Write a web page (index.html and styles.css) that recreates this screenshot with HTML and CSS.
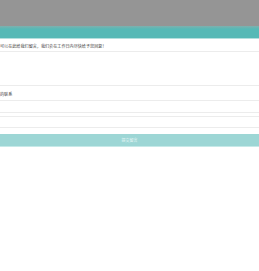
FILE: index.html
```html
<!DOCTYPE html>
<html lang="zh-CN">
<head>
    <meta charset="UTF-8">
    <meta name="viewport" content="width=device-width, initial-scale=1.0">
    <title>在线留言</title>
    <link rel="stylesheet" href="styles.css">
</head>
<body>
    <div class="page">
        <!-- 顶部 -->
        <div class="mask"></div>
        <div class="title-bar"></div>

        <!-- 留言表单 -->
        <form class="message-form">
            <div class="intro">可以在此给我们留言，我们会在工作日内尽快给予您回复！</div>
            <div class="message-box"></div>
            <div class="contact-label">的联系</div>
            <div class="field field-a"></div>
            <div class="field field-b"></div>
            <div class="field field-c"></div>
            <button type="button" class="submit-btn">提交留言</button>
        </form>
    </div>
</body>
</html>
```

FILE: styles.css
```css
:root {
    --primary-color: #56b9b6;
    --button-color: #9dd6d5;
    --line-color: #ececec;
    --text-color: #444444;
}

body {
    margin: 0;
    background: #ffffff;
    font-family: "Noto Sans CJK SC", "Noto Sans", sans-serif;
    color: var(--text-color);
}

.page {
    display: flex;
    flex-direction: column;
}

.mask {
    height: 26px;
    background: #959595;
}

.title-bar {
    height: 12px;
    background: linear-gradient(#7fb0ae, var(--primary-color) 25%);
    border-bottom: 1px solid #b3e0de;
}

.message-form {
    display: flex;
    flex-direction: column;
}

.intro {
    height: 10px;
    padding-top: 2px;
    font-size: 4.1px;
    line-height: 10px;
    border-bottom: 1px solid var(--line-color);
    white-space: nowrap;
}

.message-box {
    height: 33px;
    border-bottom: 1px solid var(--line-color);
}

.contact-label {
    height: 14px;
    font-size: 4.1px;
    line-height: 16px;
    border-bottom: 1px solid var(--line-color);
}

.field {
    border-bottom: 1px solid var(--line-color);
}

.field-a {
    height: 11px;
}

.field-b {
    height: 3px;
}

.field-c {
    height: 10px;
}

.submit-btn {
    margin-top: 6px;
    height: 12px;
    padding: 0;
    border: none;
    border-bottom: 1px solid #c6e9e8;
    box-sizing: content-box;
    background: var(--button-color);
    color: #e8f7f6;
    font-family: inherit;
    font-size: 4px;
    line-height: 12px;
    width: 100%;
}
```
